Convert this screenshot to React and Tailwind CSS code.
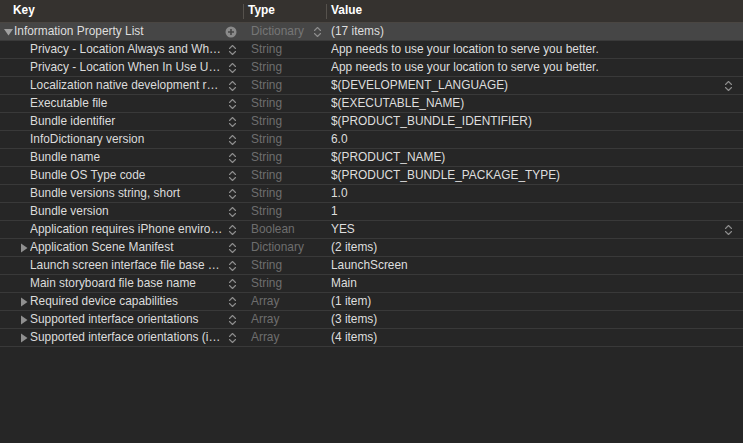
import React from "react";

const ROWS = [
  { key: "Privacy - Location Always and When In Use Usage Description", type: "String", value: "App needs to use your location to serve you better." },
  { key: "Privacy - Location When In Use Usage Description", type: "String", value: "App needs to use your location to serve you better." },
  { key: "Localization native development region", type: "String", value: "$(DEVELOPMENT_LANGUAGE)", popup: true },
  { key: "Executable file", type: "String", value: "$(EXECUTABLE_NAME)" },
  { key: "Bundle identifier", type: "String", value: "$(PRODUCT_BUNDLE_IDENTIFIER)" },
  { key: "InfoDictionary version", type: "String", value: "6.0" },
  { key: "Bundle name", type: "String", value: "$(PRODUCT_NAME)" },
  { key: "Bundle OS Type code", type: "String", value: "$(PRODUCT_BUNDLE_PACKAGE_TYPE)" },
  { key: "Bundle versions string, short", type: "String", value: "1.0" },
  { key: "Bundle version", type: "String", value: "1" },
  { key: "Application requires iPhone environment", type: "Boolean", value: "YES", popup: true },
  { key: "Application Scene Manifest", type: "Dictionary", value: "(2 items)", group: true },
  { key: "Launch screen interface file base name", type: "String", value: "LaunchScreen" },
  { key: "Main storyboard file base name", type: "String", value: "Main" },
  { key: "Required device capabilities", type: "Array", value: "(1 item)", group: true },
  { key: "Supported interface orientations", type: "Array", value: "(3 items)", group: true },
  { key: "Supported interface orientations (iPad)", type: "Array", value: "(4 items)", group: true },
];

function Stepper() {
  return (
    <svg width="9" height="12" viewBox="0 0 9 12" className="shrink-0">
      <path d="M1.5 4.5 L4.5 1.5 L7.5 4.5 M1.5 7.5 L4.5 10.5 L7.5 7.5" fill="none" stroke="#8e8e8e" strokeWidth="1.1" strokeLinecap="round" strokeLinejoin="round" />
    </svg>
  );
}

function Triangle({ down }) {
  return down ? (
    <svg width="9" height="8" viewBox="0 0 9 8" className="shrink-0">
      <path d="M0 1 L9 1 L4.5 7.5 Z" fill="#a0a0a0" />
    </svg>
  ) : (
    <svg width="8" height="10" viewBox="0 0 8 10" className="shrink-0">
      <path d="M1 0.5 L7.5 5 L1 9.5 Z" fill="#8f8f8f" />
    </svg>
  );
}

function PlusCircle() {
  return (
    <svg width="12" height="12" viewBox="0 0 12 12" className="shrink-0">
      <circle cx="6" cy="6" r="5.5" fill="#8a8a8a" />
      <path d="M6 3 V9 M3 6 H9" stroke="#464646" strokeWidth="1.6" />
    </svg>
  );
}

export default function App() {
  return (
    <div className="w-[743px] h-[443px] bg-[#262626] overflow-hidden text-[11.9px] text-[#dcdcdc]" style={{ fontFamily: '"Liberation Sans", Arial, sans-serif' }}>
      {/* header */}
      <div className="h-[23px] flex items-center bg-[#35322f] border-b border-[#4a4642] font-bold text-white">
        <div className="w-[244px] pl-[13px] border-r border-[#56524d] h-[15px] flex items-center">Key</div>
        <div className="w-[83px] pl-[4px] border-r border-[#56524d] h-[15px] flex items-center">Type</div>
        <div className="flex-1 pl-[4px]">Value</div>
      </div>

      {/* root row */}
      <div className="h-[18px] flex items-center bg-[#464646] border-b border-[#3a3a3a]">
        <div className="w-[244px] flex items-center pl-[4px] pr-[7px]">
          <Triangle down />
          <span className="ml-[1px] flex-1 truncate text-[#dedede]">Information Property List</span>
          <PlusCircle />
        </div>
        <div className="w-[83px] flex items-center pl-[7px] pr-[5px] text-[#767676]">
          <span className="flex-1">Dictionary</span>
          <Stepper />
        </div>
        <div className="flex-1 pl-[4px] text-[#dedede]">(17 items)</div>
      </div>

      {ROWS.map((r) => (
        <div key={r.key} className="h-[18px] flex items-center border-b border-[#393939]">
          <div className="w-[244px] flex items-center pl-[20px] pr-[7px]">
            <span className="w-[10px] shrink-0 flex items-center">{r.group && <Triangle />}</span>
            <span className="flex-1 min-w-0 truncate pr-[4px]">{r.key}</span>
            <Stepper />
          </div>
          <div className="w-[83px] shrink-0 pl-[7px] text-[#6e6e6e]">{r.type}</div>
          <div className="flex-1 min-w-0 flex items-center pl-[4px] pr-[10px]">
            <span className="flex-1 truncate text-[#dedede]">{r.value}</span>
            {r.popup && <Stepper />}
          </div>
        </div>
      ))}
    </div>
  );
}
